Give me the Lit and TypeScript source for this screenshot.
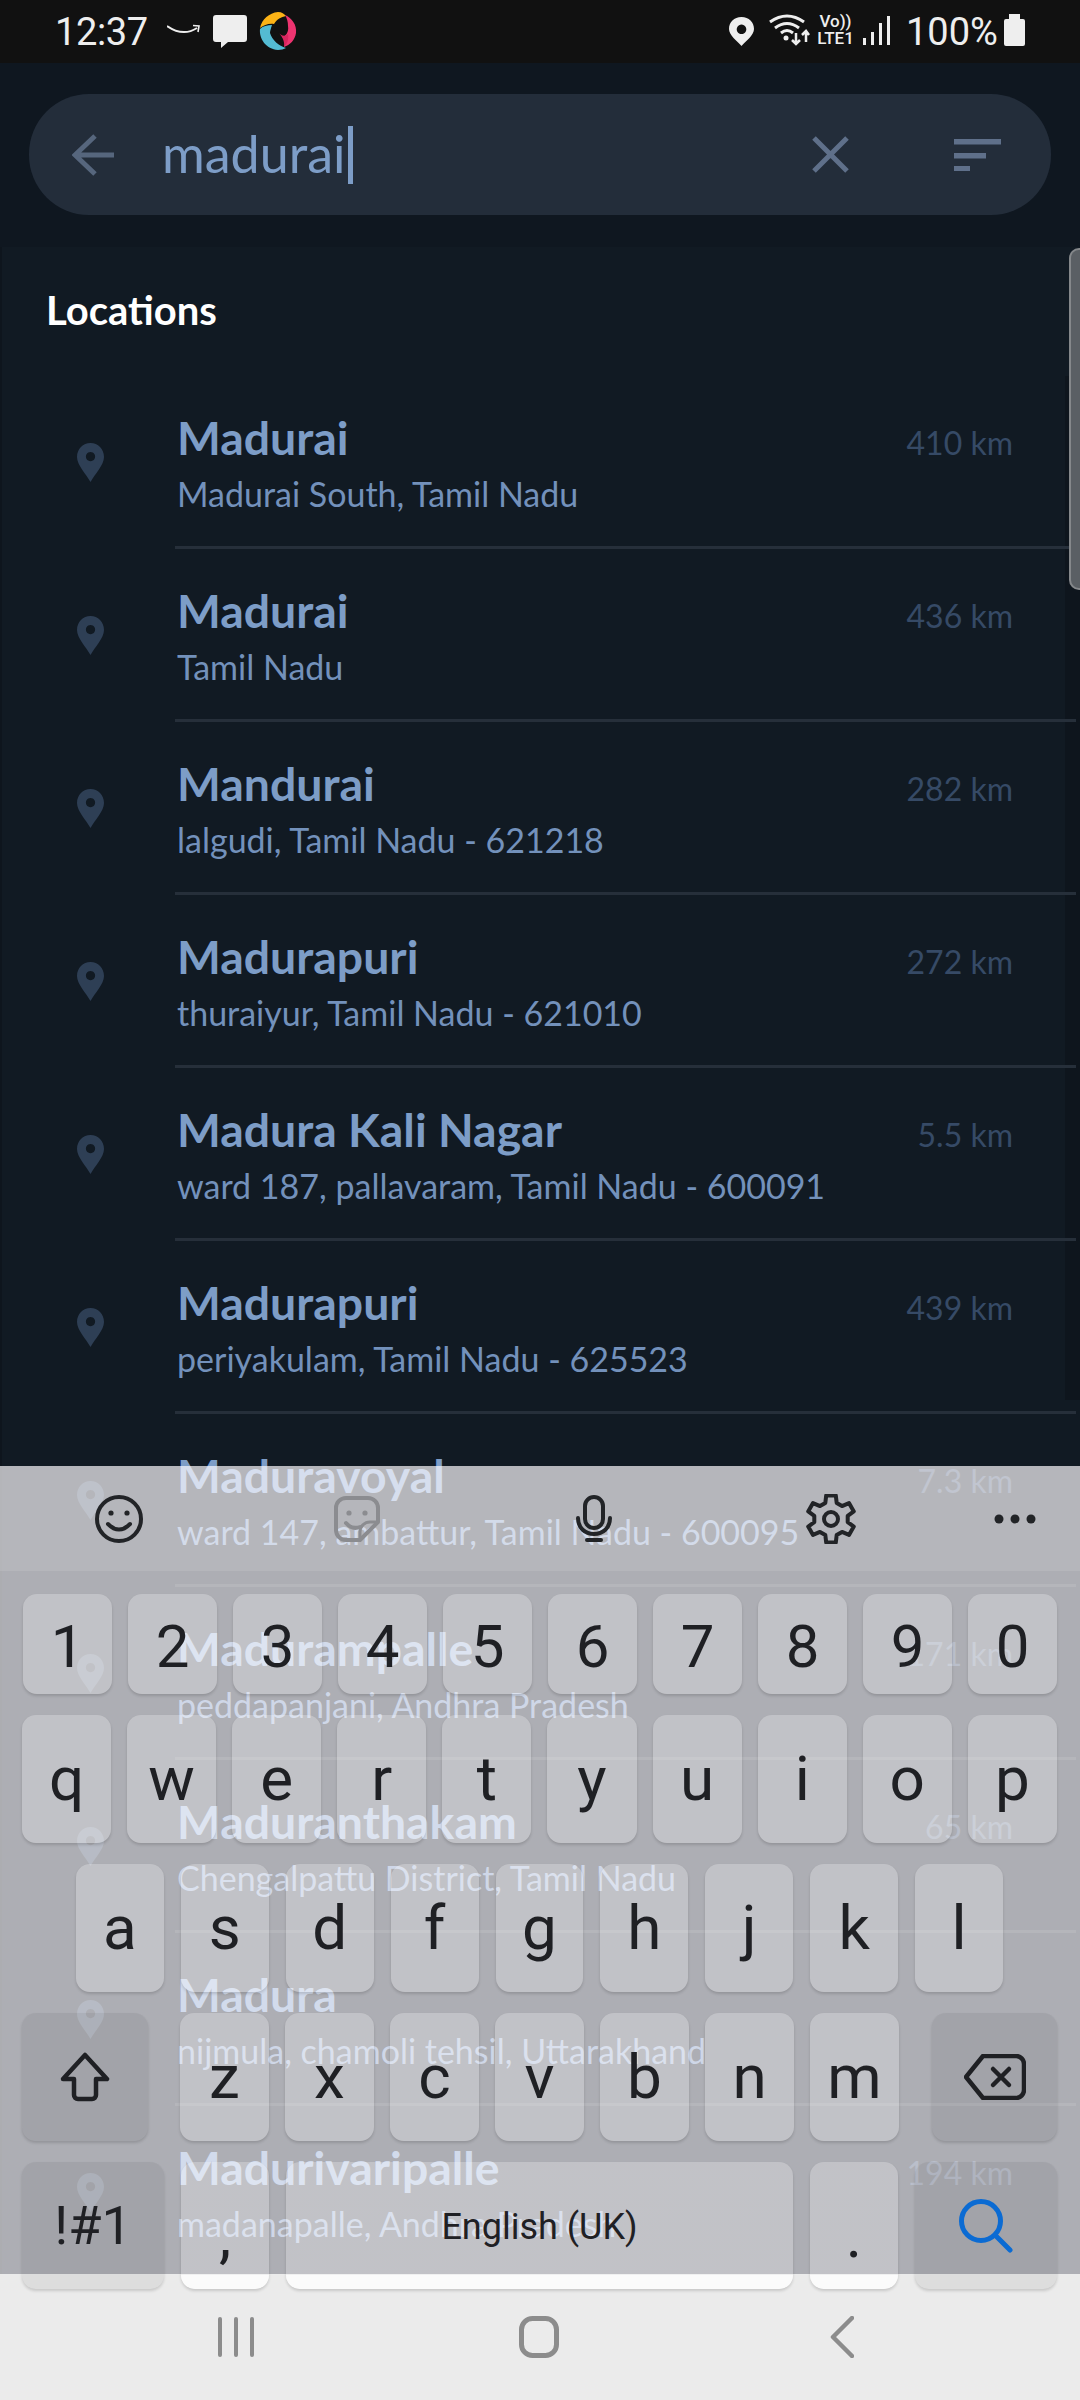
import { LitElement, css, html } from "lit";
import { customElement } from "lit/decorators.js";

const places = [
  { name: "Madurai", sub: "Madurai South, Tamil Nadu", km: "410 km" },
  { name: "Madurai", sub: "Tamil Nadu", km: "436 km" },
  { name: "Mandurai", sub: "lalgudi, Tamil Nadu - 621218", km: "282 km" },
  { name: "Madurapuri", sub: "thuraiyur, Tamil Nadu - 621010", km: "272 km" },
  { name: "Madura Kali Nagar", sub: "ward 187, pallavaram, Tamil Nadu - 600091", km: "5.5 km" },
  { name: "Madurapuri", sub: "periyakulam, Tamil Nadu - 625523", km: "439 km" },
  { name: "Maduravoyal", sub: "ward 147, ambattur, Tamil Nadu - 600095", km: "7.3 km" },
  { name: "Madurampalle", sub: "peddapanjani, Andhra Pradesh", km: "171 km" },
  { name: "Maduranthakam", sub: "Chengalpattu District, Tamil Nadu", km: "65 km" },
  { name: "Madura", sub: "nijmula, chamoli tehsil, Uttarakhand", km: "" },
  { name: "Madurivaripalle", sub: "madanapalle, Andhra Pradesh", km: "194 km" },
];

// six rounded lobes, the outline of the keyboard settings gear
function gearPath(cx: number, cy: number, outer: number, inner: number) {
  const pts: string[] = [];
  for (let i = 0; i < 6; i++) {
    const a = (Math.PI / 3) * i - Math.PI / 2;
    for (const [off, r] of [[-0.34, inner], [-0.2, outer], [0.2, outer], [0.34, inner]] as const) {
      pts.push(`${(cx + Math.cos(a + off) * r).toFixed(1)} ${(cy + Math.sin(a + off) * r).toFixed(1)}`);
    }
  }
  return "M" + pts.join("L") + "Z";
}

const pinIcon = html`<svg class="pin" viewBox="0 0 27 39"><path fill-rule="evenodd" d="M13.5 0C21 0 27 6 27 14C27 22 18 31 13.5 39C9 31 0 22 0 14C0 6 6 0 13.5 0ZM13.5 9a4.6 4.6 0 1 0 .01 0Z"/></svg>`;

@customElement("app-root")
export class AppRoot extends LitElement {
  static styles = css`
    :host {
      display: block;
      position: relative;
      width: 1080px;
      height: 2400px;
      overflow: hidden;
      background: #111a23;
      font-family: Lato, "Noto Sans", sans-serif;
    }
    svg { display: block; flex: none; }

    .status {
      display: flex;
      align-items: flex-start;
      height: 63px;
      padding: 0 55px 0 55px;
      box-sizing: border-box;
      background: #111;
      color: #eee;
      font: 400 38px/1 Roboto, sans-serif;
    }
    .time { width: 95px; margin: 13px 17px 0 0; letter-spacing: -0.4px; white-space: nowrap; }
    .smile { margin: 24px 13px 0 0; }
    .msg { margin: 15px 12px 0 0; }
    .logo { margin-top: 12px; }
    .status-right { display: flex; align-items: flex-start; margin-left: auto; }
    .st-pin { margin: 17px 15px 0 0; }
    .wifi { margin: 13px 6px 0 0; }
    .volte { width: 39px; margin: 13px 8px 0 0; text-align: center; font-weight: 500; white-space: nowrap; }
    .volte div { font-size: 17px; line-height: 17px; }
    .signal { margin: 16px 16px 0 0; }
    .pct { width: 91px; margin: 13px 7px 0 0; white-space: nowrap; }
    .batt { margin-top: 14px; }

    .head { height: 184px; padding-top: 31px; box-sizing: border-box; background: #0f1720; }
    .search {
      display: flex;
      align-items: center;
      height: 121px;
      margin: 0 29px;
      border-radius: 60px;
      background: #232d3a;
    }
    .back { margin: 0 48px 0 43px; }
    .query { margin-top: -3px; color: #7d9dc7; font-size: 52px; line-height: 58px; }
    .caret { width: 5px; height: 58px; margin-left: 2px; background: #7d9dc7; }
    .clear { margin: 0 105px 0 auto; }
    .filter { margin: 0 50px 0 0; }

    .list { position: relative; background: #111a23; box-shadow: inset 2px 0 0 #0e151d; }
    .section {
      height: 129px;
      padding: 41px 0 0 46px;
      box-sizing: border-box;
      color: #fff;
      font-size: 40px;
      font-weight: 700;
      line-height: 44px;
    }
    .row { position: relative; display: flex; height: 173px; }
    .pin-col { width: 175px; padding: 67px 0 0 77px; box-sizing: border-box; flex: none; }
    .pin { width: 27px; height: 39px; fill: #2e3f55; }
    .body {
      display: flex;
      flex: 1;
      justify-content: space-between;
      margin-right: 4px;
      padding: 33px 63px 0 2px;
      border-bottom: 3px solid #262f3a;
    }
    .name { color: #7d9dc7; font-size: 46.4px; font-weight: 700; line-height: 56px; white-space: nowrap; }
    .sub { margin-top: 7px; color: #7391bb; font-size: 34px; line-height: 44px; white-space: nowrap; }
    .km { margin-top: 14px; color: #364a66; font-size: 32px; line-height: 40px; white-space: nowrap; }
    .strip { position: absolute; top: 129px; right: 0; width: 15px; height: 1024px; background: #0e151d; }
    .thumb {
      position: absolute;
      top: 1px;
      right: 0;
      width: 11px;
      height: 342px;
      box-sizing: border-box;
      border: 2px solid #85888b;
      border-right: 0;
      border-radius: 10px 0 0 10px;
      background: #5a5f64;
    }

    .kb {
      position: absolute;
      top: 1466px;
      left: 0;
      right: 0;
      bottom: 0;
      background:
        linear-gradient(#ebebeb, #ebebeb) bottom / 100% 126px no-repeat,
        rgba(255, 252, 255, 0.66);
      color: #1f2024;
      font-family: Roboto, sans-serif;
    }
    .tools {
      display: grid;
      grid-template-columns: 238px 237px 237px 237px 131px;
      align-items: center;
      justify-items: center;
      height: 105px;
      box-sizing: border-box;
      background: rgba(255, 255, 255, 0.1);
    }
    .keys { display: flex; flex-direction: column; gap: 21px; padding: 23px 23px 0 22px; }
    .line { display: flex; gap: 16px; height: 128px; }
    .line.nums { height: 100px; padding-left: 1px; }
    .line.home { padding: 0 54px; gap: 17px; }
    .line.low { height: 127px; gap: 17px; }
    .key {
      display: flex;
      flex: 1;
      align-items: center;
      justify-content: center;
      min-width: 0;
      box-sizing: border-box;
      border-radius: 14px;
      background: rgba(255, 255, 255, 0.25);
      box-shadow: 0 2px 3px rgba(0, 0, 0, 0.15);
      font-size: 62px;
      line-height: 1;
    }
    .nums .key { padding-top: 5px; font-size: 60px; }
    .key.dark { flex: none; background: rgba(0, 0, 0, 0.06); }
    .key.shift { width: 126px; margin-right: 16px; }
    .key.del { width: 125px; margin-left: 17px; }
    .key.sym { width: 142px; font-size: 54px; }
    .key.go { width: 142px; }
    .key.low-key { background: linear-gradient(rgba(255, 255, 255, 0.25) 113px, #fbfbfb 113px); }
    .key.punct { flex: none; width: 88px; padding-top: 20px; }
    .key.space { flex: none; width: 507px; padding-top: 2px; font-size: 36px; }
    .nav {
      display: grid;
      grid-template-columns: repeat(3, 303px);
      justify-items: center;
      padding: 27px 0 0 84px;
    }
  `;

  render() {
    return html`
      <div class="status">
        <div class="time">12:37</div>
        <svg class="smile" width="33" height="12" viewBox="0 0 33 12" fill="none" stroke="#eee" stroke-width="2"><path d="M0 2Q16 13 30 4"/><path d="M26 1.5L32 2L31 8" stroke-width="1.6"/></svg>
        <svg class="msg" width="34" height="33" viewBox="0 0 34 33"><path fill="#eee" d="M3 0H31A3 3 0 0 1 34 3V24A3 3 0 0 1 31 27H15L8 33V27H3A3 3 0 0 1 0 24V3A3 3 0 0 1 3 0Z"/></svg>
        <svg class="logo" width="38" height="38" viewBox="0 0 38 38">
          <path fill="#fcb316" d="M1 16C3 7 10 1 19 0C23 0 25 2 27 4C22 5 18 7 15 12C10 11 5 13 1 16Z"/>
          <path fill="#ee3470" d="M26 3C33 6 38 13 37 21C36 28 31 33 25 35C27 31 26 27 23 25C27 24 30 20 29 14C29 10 28 6 26 3Z"/>
          <path fill="#d8265f" d="M19 20C22 24 26 25 29 22C30 28 28 32 25 35C26 29 23 24 19 20Z"/>
          <path fill="#54bbd3" d="M1 17C0 27 7 37 19 38C22 38 25 37 27 36C20 34 13 28 11 21C11 19 12 16 13 13C8 13 4 14 1 17Z"/>
        </svg>
        <div class="status-right">
          <svg class="st-pin" width="25" height="29" viewBox="0 0 25 29"><path fill="#eee" fill-rule="evenodd" d="M12.5 0C20 0 25 5 25 12C25 18 17 24 12.5 29C8 24 0 18 0 12C0 5 5 0 12.5 0ZM12.5 7.5a4.8 4.8 0 1 0 .01 0Z"/></svg>
          <svg class="wifi" width="41" height="34" viewBox="0 0 41 34" fill="none" stroke="#eee">
            <path stroke-width="3" d="M1 9Q18 -3 35 9"/>
            <path stroke-width="3" d="M6 15Q18 6 30 15"/>
            <path stroke-width="3" d="M12 20Q18 15 24 20"/>
            <circle cx="17" cy="25" r="2.5" fill="#eee" stroke="none"/>
            <path stroke-width="2.5" d="M27 20V31M23 27L27 31L31 27"/>
            <path stroke-width="2.5" d="M37 29V18M33 22L37 18L40 22"/>
          </svg>
          <div class="volte"><div>Vo))</div><div>LTE1</div></div>
          <svg class="signal" width="27" height="30" viewBox="0 0 27 30" fill="#eee"><rect x="0" y="22" width="3" height="7"/><rect x="8" y="16" width="3" height="13"/><rect x="16" y="7" width="3" height="22"/><rect x="24" y="0" width="3" height="29"/></svg>
          <div class="pct">100%</div>
          <svg class="batt" width="21" height="32" viewBox="0 0 21 32"><path fill="#eee" d="M5 0H16V5H19A2 2 0 0 1 21 7V30A2 2 0 0 1 19 32H2A2 2 0 0 1 0 30V7A2 2 0 0 1 2 5H5Z"/></svg>
        </div>
      </div>

      <div class="head">
        <div class="search">
          <svg class="back" width="42" height="42" viewBox="0 0 42 42" fill="none" stroke="#56667d" stroke-width="5"><path d="M42 21H4M23 2L3 21L23 40"/></svg>
          <span class="query">madurai</span><span class="caret"></span>
          <svg class="clear" width="37" height="37" viewBox="0 0 37 37" fill="none" stroke="#5f708a" stroke-width="5"><path d="M2 2L35 35M35 2L2 35"/></svg>
          <svg class="filter" width="47" height="32" viewBox="0 0 47 32" fill="#5f708a"><rect width="47" height="5.5"/><rect y="14" width="32" height="5.5"/><rect y="27" width="16" height="5.5"/></svg>
        </div>
      </div>

      <div class="list">
        <div class="strip"></div>
        <div class="section">Locations</div>
        ${places.map(
          (p) => html`
            <div class="row">
              <div class="pin-col">${pinIcon}</div>
              <div class="body">
                <div>
                  <div class="name">${p.name}</div>
                  <div class="sub">${p.sub}</div>
                </div>
                <div class="km">${p.km}</div>
              </div>
            </div>
          `
        )}
        <div class="thumb"></div>
      </div>

      <div class="kb">
        <div class="tools">
          <svg width="48" height="48" viewBox="0 0 48 48" fill="none" stroke="#222427" stroke-width="4" stroke-linecap="round"><circle cx="24" cy="24" r="22"/><path d="M13 29Q24 40 35 29"/><circle cx="16" cy="18" r="2.6" fill="#222427" stroke="none"/><circle cx="32" cy="18" r="2.6" fill="#222427" stroke="none"/></svg>
          <svg width="46" height="46" viewBox="0 0 46 46" fill="none" stroke="#8b8c90" stroke-width="4" stroke-linejoin="round"><path d="M12 2H34A10 10 0 0 1 44 12V26L26 44H12A10 10 0 0 1 2 34V12A10 10 0 0 1 12 2Z"/><path d="M44 26H36A10 10 0 0 0 26 36V44" stroke-width="3"/><circle cx="15" cy="17" r="2.6" fill="#8b8c90" stroke="none"/><circle cx="31" cy="17" r="2.6" fill="#8b8c90" stroke="none"/><path d="M12 27Q18 34 26 31" stroke-linecap="round"/></svg>
          <svg width="36" height="47" viewBox="0 0 36 47" fill="none" stroke="#222427" stroke-width="4" stroke-linecap="round"><rect x="9" y="2" width="18" height="31" rx="9"/><path d="M2 23C2 33 9 39 18 39C27 39 34 33 34 23M11 45H25"/></svg>
          <svg width="50" height="50" viewBox="0 0 50 50" fill="none" stroke="#222427" stroke-width="4" stroke-linejoin="round"><path d=${gearPath(25, 25, 24, 17)}/><circle cx="25" cy="25" r="7"/></svg>
          <svg width="42" height="10" viewBox="0 0 42 10" fill="#222427"><circle cx="5" cy="5" r="4.5"/><circle cx="21" cy="5" r="4.5"/><circle cx="37" cy="5" r="4.5"/></svg>
        </div>

        <div class="keys">
          <div class="line nums">${[..."1234567890"].map((k) => html`<div class="key">${k}</div>`)}</div>
          <div class="line">${[..."qwertyuiop"].map((k) => html`<div class="key">${k}</div>`)}</div>
          <div class="line home">${[..."asdfghjkl"].map((k) => html`<div class="key">${k}</div>`)}</div>
          <div class="line">
            <div class="key dark shift">
              <svg width="50" height="50" viewBox="0 0 50 50" fill="none" stroke="#1f2024" stroke-width="4.5" stroke-linejoin="round"><path d="M25 3L47 27H36V43A4 4 0 0 1 32 47H18A4 4 0 0 1 14 43V27H3Z"/></svg>
            </div>
            ${[..."zxcvbnm"].map((k) => html`<div class="key">${k}</div>`)}
            <div class="key dark del">
              <svg width="62" height="46" viewBox="0 0 62 46" fill="none" stroke="#1f2024" stroke-width="4.5" stroke-linejoin="round" stroke-linecap="round"><path d="M19 2H52A8 8 0 0 1 60 10V36A8 8 0 0 1 52 44H19L2 23Z"/><path d="M29 15L45 31M45 15L29 31"/></svg>
            </div>
          </div>
          <div class="line low">
            <div class="key dark sym">!#1</div>
            <div class="key punct low-key">,</div>
            <div class="key space low-key">English (UK)</div>
            <div class="key punct low-key">.</div>
            <div class="key dark go">
              <svg width="54" height="54" viewBox="0 0 54 54" fill="none" stroke="#0b6bd3" stroke-width="5" stroke-linecap="round"><circle cx="22" cy="22" r="19.5"/><path d="M36 36L51 51"/></svg>
            </div>
          </div>
        </div>

        <div class="nav">
          <svg width="36" height="42" viewBox="0 0 36 42" fill="#8c8c8c"><rect x="0" y="1" width="4" height="40" rx="2"/><rect x="16" y="1" width="4" height="40" rx="2"/><rect x="32" y="1" width="4" height="40" rx="2"/></svg>
          <svg width="40" height="42" viewBox="0 0 40 42" fill="none" stroke="#8c8c8c" stroke-width="5"><rect x="2.5" y="2.5" width="35" height="37" rx="11"/></svg>
          <svg width="24" height="42" viewBox="0 0 24 42" fill="none" stroke="#8c8c8c" stroke-width="4.5" stroke-linecap="round" stroke-linejoin="round"><path d="M22 2L3 21L22 40"/></svg>
        </div>
      </div>
    `;
  }
}
